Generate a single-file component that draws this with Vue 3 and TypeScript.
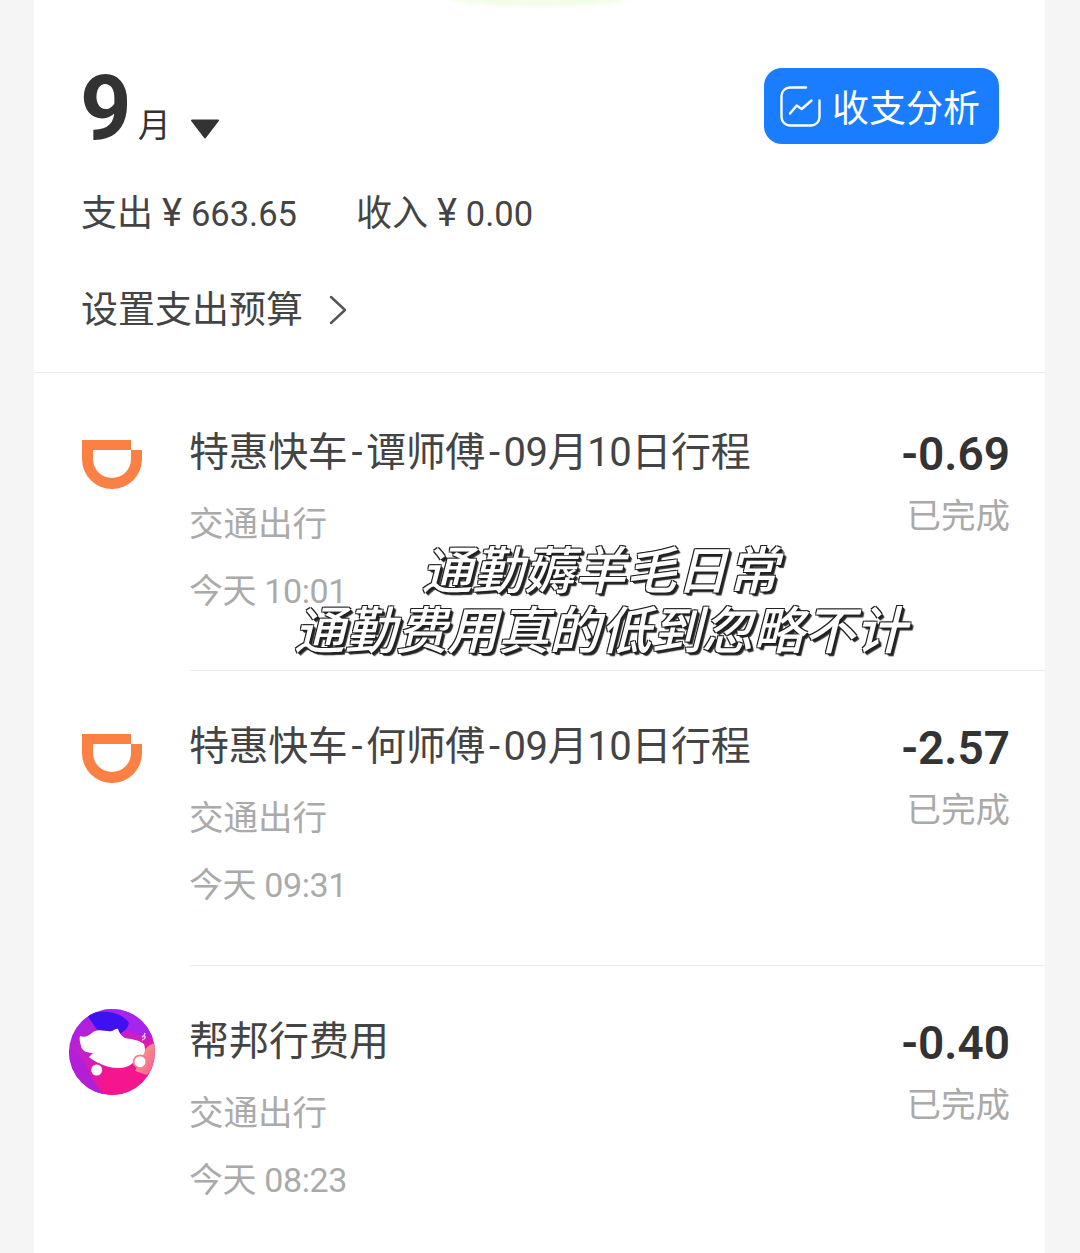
<template>
  <div class="page">
    <div class="glow"></div>
    <main class="card">
      <header class="summary">
        <div class="month-row">
          <div class="month">
            <span class="month-num">9</span>
            <span class="month-unit">月</span>
            <svg class="caret" viewBox="0 0 30 20" width="30" height="20">
              <path d="M2 1.500H28L15 18.500Z" fill="#333" stroke="#333" stroke-width="2" stroke-linejoin="round" />
            </svg>
          </div>
          <button class="analysis">
            <svg viewBox="0 0 41 41" width="41" height="41" fill="none" stroke="#fff" stroke-width="2.4" stroke-linecap="round" stroke-linejoin="round">
              <path d="M26 1.500H10A8.500 8.500 0 0 0 1.500 10V31A8.500 8.500 0 0 0 10 39.500H31A8.500 8.500 0 0 0 39.500 31V14.500" />
              <path d="M10 27.500L16.700 19.500L21.700 23L31.500 14.500" />
            </svg>
            <span>收支分析</span>
          </button>
        </div>
        <div class="totals">
          <span>支出 <span class="yen">¥</span><span class="num">663.65</span></span>
          <span>收入 <span class="yen">¥</span><span class="num">0.00</span></span>
        </div>
        <div class="budget">
          <span>设置支出预算</span>
          <svg viewBox="0 0 18 30" width="18" height="30" fill="none" stroke="#555" stroke-width="2.4" stroke-linecap="round" stroke-linejoin="round">
            <path d="M2 2L16 15L2 28" />
          </svg>
        </div>
      </header>

      <section class="list">
        <div v-for="(item, i) in items" :key="i" class="row" :class="{ first: i === 0 }">
          <div class="row-icon">
            <svg v-if="item.logo === 'didi'" class="didi" viewBox="0 0 60 49" width="60" height="49">
              <path fill-rule="evenodd" fill="#fb8043" d="M0 0H49V10H60V19A30 30 0 0 1 0 19ZM11 10V19A19 19 0 0 0 49 19V10Z" />
            </svg>
            <svg v-else viewBox="0 0 86 86" width="86" height="86">
              <defs>
                <clipPath id="pig-clip"><circle cx="43" cy="43" r="43" /></clipPath>
                <linearGradient id="pig-bg" x1="0.1" y1="0" x2="0.6" y2="1">
                  <stop offset="0" stop-color="#a020ea" />
                  <stop offset="0.5" stop-color="#c81fc8" />
                  <stop offset="0.85" stop-color="#f5148f" />
                </linearGradient>
                <linearGradient id="pig-side" x1="0" y1="0" x2="1" y2="1">
                  <stop offset="0" stop-color="#f8b080" />
                  <stop offset="1" stop-color="#f5559a" />
                </linearGradient>
              </defs>
              <g clip-path="url(#pig-clip)">
                <rect width="86" height="86" fill="url(#pig-bg)" />
                <path d="M34 0H86V30C74 28 66 22 56 22C62 14 50 8 34 0Z" fill="#a624ec" />
                <path d="M18 6C32 0 52 2 60 14C58 24 44 30 34 26C26 20 24 14 18 6Z" fill="#3f10f0" />
                <path d="M0 40C10 44 16 52 20 62C24 72 30 80 36 86H0Z" fill="#b21fd6" />
                <path d="M30 60H74L68 78L52 86H38Z" fill="#f5158c" />
                <path d="M86 34C78 36 74 42 72 50L66 62L78 66L86 56Z" fill="url(#pig-side)" />
                <path fill="#fff" d="M11 27C15 29 20 27 24 23C30 19 37 23 43 22C46 21 47 19 49 20C50 23 52 27 56 29C62 30 70 31 75 35C77 41 76 47 71 47C65 52 62 59 50 59C42 59 36 57 29 54C26 52 22 50 20 48L24 44C18 44 13 42 12 37C11 33 10 30 11 27Z" />
                <circle cx="27.700" cy="61" r="7.200" fill="#ec17a0" />
                <circle cx="27.700" cy="61" r="5.500" fill="#fff" />
                <circle cx="71" cy="52.700" r="7.200" fill="#f67f8a" />
                <circle cx="71" cy="52.700" r="5.500" fill="#fff" />
                <path d="M73 31C77 30 77 26 74 27C72 28 75 29 76 24" fill="none" stroke="#f9d0dc" stroke-width="1.300" />
              </g>
            </svg>
          </div>
          <div class="row-body">
            <div class="row-text">
              <div class="title" :class="{ tight: item.title.includes('-') }">
                <template v-for="(part, j) in item.title.split('-')" :key="j">
                  <span v-if="j > 0" class="dash">-</span>{{ part }}
                </template>
              </div>
              <div class="meta category">{{ item.category }}</div>
              <div class="meta time">{{ item.time }}</div>
            </div>
            <div class="row-amount">
              <div class="amount">{{ item.amount }}</div>
              <div class="meta status">已完成</div>
            </div>
          </div>
        </div>
      </section>
    </main>
    <div class="caption">
      <div>通勤薅羊毛日常</div>
      <div>通勤费用真的低到忽略不计</div>
    </div>
  </div>
</template>

<script setup lang="ts">
interface Bill {
  logo: 'didi' | 'pig'
  title: string
  category: string
  time: string
  amount: string
}

const items: Bill[] = [
  { logo: 'didi', title: '特惠快车-谭师傅-09月10日行程', category: '交通出行', time: '今天 10:01', amount: '-0.69' },
  { logo: 'didi', title: '特惠快车-何师傅-09月10日行程', category: '交通出行', time: '今天 09:31', amount: '-2.57' },
  { logo: 'pig', title: '帮邦行费用', category: '交通出行', time: '今天 08:23', amount: '-0.40' }
]
</script>

<style>
html,
body {
  margin: 0;
  background: #f5f5f5;
}
</style>

<style scoped>
.page {
  position: relative;
  height: 1253px;
  overflow: hidden;
  background: #f5f5f5;
  font-family: Roboto, "Noto Sans CJK SC", sans-serif;
  color: #333;
}

.card {
  margin: 0 35px 0 34px;
  height: 100%;
  background: #fff;
}

.glow {
  position: absolute;
  z-index: 1;
  left: 448px;
  top: -12px;
  width: 180px;
  height: 18px;
  border-radius: 50%;
  background: #f1fde4;
  filter: blur(2px);
}

.summary {
  height: 373px;
  box-sizing: border-box;
  padding: 68px 46px 0 47px;
  border-bottom: 1px solid #ececec;
}

.month-row {
  display: flex;
  justify-content: space-between;
  align-items: flex-start;
}

.month {
  display: flex;
  align-items: flex-start;
  height: 76px;
}

.month-num {
  margin: 3px 0 0 -1px;
  font-size: 90px;
  line-height: 76px;
  font-weight: 700;
  color: #333;
}

.month-unit {
  margin: 39px 0 0 6px;
  font-size: 33px;
  line-height: 38px;
}

.caret {
  margin: 51px 0 0 19px;
}

.analysis {
  display: flex;
  align-items: center;
  gap: 11px;
  width: 235px;
  height: 76px;
  padding: 0 0 0 16px;
  border: none;
  border-radius: 18px;
  background: #1a7dff;
  color: #fff;
  font-family: inherit;
  font-size: 37px;
}

.totals {
  display: flex;
  gap: 59px;
  margin-top: 43px;
  font-size: 36px;
  line-height: 52px;
  color: #444;
}

.yen {
  margin-right: 9px;
  font-size: 38px;
}

.num {
  font-size: 34.5px;
}

.budget {
  display: flex;
  align-items: center;
  gap: 26px;
  margin-top: 45px;
  font-size: 37px;
  line-height: 52px;
  color: #444;
}

.budget svg {
  margin-top: -3px;
}

.row {
  display: flex;
  height: 295px;
}

.row.first {
  height: 297px;
}

.row-icon {
  display: flex;
  justify-content: center;
  align-items: center;
  flex: 0 0 156px;
  height: 86px;
  margin-top: 44px;
}

.row.first .row-icon {
  margin-top: 47px;
}

.didi {
  margin-top: 2px;
}

.row-body {
  flex: 1;
  display: flex;
  justify-content: space-between;
  box-sizing: border-box;
  padding: 51px 35px 0 0;
  border-top: 1px solid #ececec;
}

.row.first .row-body {
  padding-top: 55px;
  border-top: none;
}

.row-text {
  margin-left: -1px;
}

.title {
  font-size: 40px;
  line-height: 50px;
  color: #444;
}

.title.tight {
  letter-spacing: -0.4px;
}

.dash {
  margin: 0 4px;
}

.meta {
  font-size: 34.5px;
  line-height: 44px;
  color: #aaa;
}

.category {
  margin-top: 24px;
}

.time {
  margin-top: 23px;
  font-size: 34px;
  letter-spacing: -0.4px;
}

.row-amount {
  display: flex;
  flex-direction: column;
  align-items: flex-end;
}

.amount {
  margin-top: 1px;
  font-size: 46px;
  line-height: 50px;
  font-weight: 600;
  color: #333;
}

.status {
  margin-top: 15px;
}

.caption {
  position: absolute;
  z-index: 2;
  left: 0;
  right: 0;
  top: 542px;
  padding-left: 120px;
  text-align: center;
  font-size: 51px;
  line-height: 60px;
  font-weight: 500;
  font-style: italic;
  color: #fff;
  text-shadow:
    -1px -1px 0 #222,
    1px -1px 0 #222,
    -1px 1px 0 #222,
    1px 1px 0 #222,
    2px 2px 0 #222,
    3px 3px 1px #333;
}
</style>
